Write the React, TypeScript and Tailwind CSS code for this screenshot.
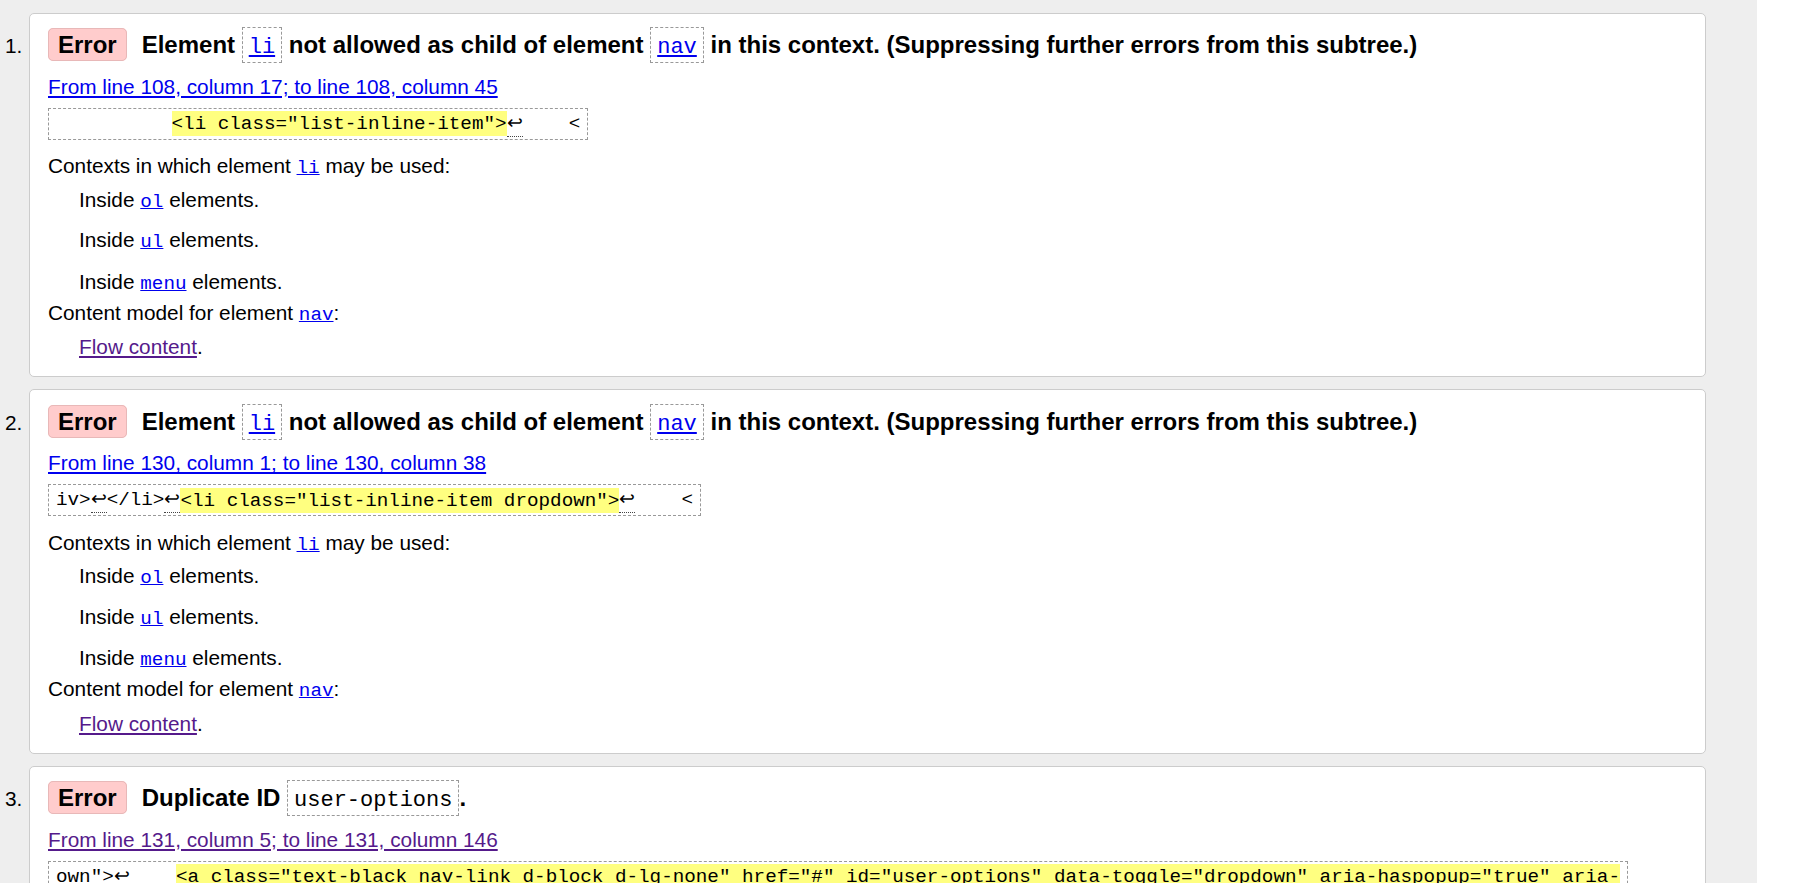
import React from "react";

type CardProps = {
  index: number;
  title: React.ReactNode;
  location: string;
  visited?: boolean;
  extract: React.ReactNode;
  details?: boolean;
};

function Lf() {
  return (
    <span className="font-['DejaVu_Sans',sans-serif] font-light leading-none border-b border-dotted border-[#444444] pb-[2px]">
      ↩
    </span>
  );
}

function Hl({ children }: { children: React.ReactNode }) {
  return <span className="bg-[#ffff80] py-[1.5px]">{children}</span>;
}

function Code({ children }: { children: React.ReactNode }) {
  return (
    <a
      href="#"
      className="font-['Liberation_Mono',monospace] text-[19.25px] leading-none text-[#0000ee] underline"
    >
      {children}
    </a>
  );
}

function HeadCode({ children, link = true }: { children: React.ReactNode; link?: boolean }) {
  return (
    <span className="inline-block border border-dashed border-[#999999] px-[6px] pt-[7px] pb-[2px] font-['Liberation_Mono',monospace] text-[22px] font-normal leading-[25px]">
      {link ? (
        <a href="#" className="text-[#0000ee] underline">
          {children}
        </a>
      ) : (
        children
      )}
    </span>
  );
}

function Details() {
  return (
    <dl>
      <dt className="mt-[14.3px]">
        Contexts in which element <Code>li</Code> may be used:
      </dt>
      <dd className="mt-[9px] pl-[31px]">
        Inside <Code>ol</Code> elements.
      </dd>
      <dd className="mt-[16.5px] pl-[31px]">
        Inside <Code>ul</Code> elements.
      </dd>
      <dd className="mt-[17px] pl-[31px]">
        Inside <Code>menu</Code> elements.
      </dd>
      <dt className="mt-[7px]">
        Content model for element <Code>nav</Code>:
      </dt>
      <dd className="mt-[10px] pl-[31px]">
        <a href="#" className="text-[#551a8b] underline">
          Flow content
        </a>
        .
      </dd>
    </dl>
  );
}

function ErrorCard({ index, title, location, visited, extract, details }: CardProps) {
  return (
    <li className="flex mb-[12px]">
      <div className="w-[29px] shrink-0 pl-[5px] pt-[15.6px] leading-[36px]">{index}.</div>
      <div className="flex-1 bg-white border border-[#cccccc] rounded-[5px] px-[18px] pt-[13.4px] pb-[17.2px]">
        <div className="h-[36px] leading-[36px] text-[24px] font-bold whitespace-nowrap">
          <span className="bg-[#ffcccc] border border-[#e8b8b8] rounded-[5px] px-[9px] py-[2px] mr-[15px]">
            Error
          </span>
          {title}
        </div>
        <div className="mt-[11.7px]">
          <a
            href="#"
            className={visited ? "text-[#551a8b] underline" : "text-[#0000ee] underline"}
          >
            {location}
          </a>
        </div>
        <div className="mt-[9.2px] w-fit border border-dashed border-[#999999] px-[7px] leading-[30px] font-['Liberation_Mono',monospace] text-[19.25px] whitespace-pre">
          {extract}
        </div>
        {details && <Details />}
      </div>
    </li>
  );
}

function App() {
  return (
    <div className="h-screen overflow-hidden flex bg-white text-black font-['Liberation_Sans',Arial,sans-serif] text-[20.8px] leading-[24px]">
      <div className="w-[1757px] shrink-0 bg-[#eeeeee] pt-[12.7px] pr-[51px]">
        <ol>
          <ErrorCard
            index={1}
            title={
              <>
                Element <HeadCode>li</HeadCode> not allowed as child of element{" "}
                <HeadCode>nav</HeadCode> in this context. (Suppressing further errors from this
                subtree.)
              </>
            }
            location="From line 108, column 17; to line 108, column 45"
            extract={
              <>
                {"          "}
                <Hl>{'<li class="list-inline-item">'}</Hl>
                <Lf />
                {"    <"}
              </>
            }
            details
          />
          <ErrorCard
            index={2}
            title={
              <>
                Element <HeadCode>li</HeadCode> not allowed as child of element{" "}
                <HeadCode>nav</HeadCode> in this context. (Suppressing further errors from this
                subtree.)
              </>
            }
            location="From line 130, column 1; to line 130, column 38"
            extract={
              <>
                {"iv>"}
                <Lf />
                {"</li>"}
                <Lf />
                <Hl>{'<li class="list-inline-item dropdown">'}</Hl>
                <Lf />
                {"    <"}
              </>
            }
            details
          />
          <ErrorCard
            index={3}
            title={
              <>
                Duplicate ID <HeadCode link={false}>user-options</HeadCode>.
              </>
            }
            location="From line 131, column 5; to line 131, column 146"
            visited
            extract={
              <>
                {'own">'}
                <Lf />
                {"    "}
                <Hl>
                  {
                    '<a class="text-black nav-link d-block d-lg-none" href="#" id="user-options" data-toggle="dropdown" aria-haspopup="true" aria-'
                  }
                </Hl>
                {"\n"}
                <Hl>{'expanded="false">'}</Hl>
                <Lf />
                {"        <"}
              </>
            }
          />
        </ol>
      </div>
      <div className="flex-1 bg-white" />
    </div>
  );
}

export default App;
